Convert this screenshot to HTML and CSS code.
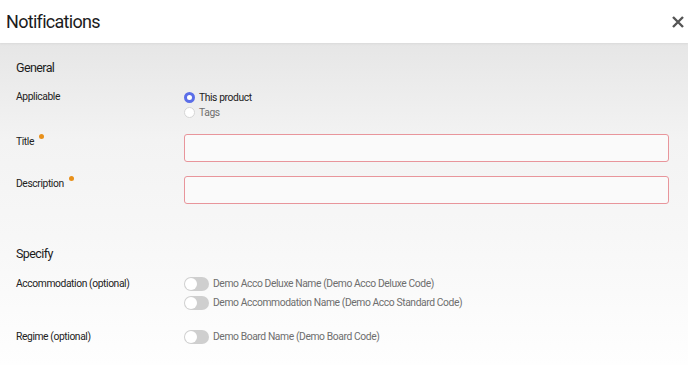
FILE: index.html
```html
<!DOCTYPE html>
<html lang="en">
<head>
    <meta charset="UTF-8">
    <meta name="viewport" content="width=device-width, initial-scale=1.0">
    <title>Notifications</title>
    <link rel="stylesheet" href="styles.css">
</head>
<body>
    <div class="modal">
        <div class="modal-header">
            <h1>Notifications</h1>
            <button class="close-btn" aria-label="Close">
                <svg width="12" height="12" viewBox="0 0 12 12">
                    <path d="M1 1 L11 11 M11 1 L1 11" stroke="#555" stroke-width="2.4" stroke-linecap="butt"/>
                </svg>
            </button>
        </div>

        <div class="modal-body">
            <h2 class="section-title">General</h2>

            <div class="row row-applicable">
                <div class="label">Applicable</div>
                <div class="field radios">
                    <label class="radio checked"><span class="dot"></span>This product</label>
                    <label class="radio muted"><span class="dot"></span>Tags</label>
                </div>
            </div>

            <div class="row row-input">
                <div class="label">Title<span class="required"></span></div>
                <div class="field"><input type="text" class="text-input"></div>
            </div>

            <div class="row row-input">
                <div class="label">Description<span class="required"></span></div>
                <div class="field"><input type="text" class="text-input"></div>
            </div>

            <h2 class="section-title specify">Specify</h2>

            <div class="row row-toggles">
                <div class="label">Accommodation (optional)</div>
                <div class="field toggles">
                    <label class="toggle"><span class="switch"></span>Demo Acco Deluxe Name (Demo Acco Deluxe Code)</label>
                    <label class="toggle"><span class="switch"></span>Demo Accommodation Name (Demo Acco Standard Code)</label>
                </div>
            </div>

            <div class="row row-toggles regime">
                <div class="label">Regime (optional)</div>
                <div class="field toggles">
                    <label class="toggle"><span class="switch"></span>Demo Board Name (Demo Board Code)</label>
                </div>
            </div>
        </div>
    </div>
</body>
</html>
```

FILE: styles.css
```css
:root {
    --text-color: #1c1c1c;
    --muted-color: #6e6e6e;
    --accent: #5b6ee8;
    --error-border: #e8959b;
    --required: #e8901a;
}

* {
    box-sizing: border-box;
}

body {
    margin: 0;
    font-family: Roboto, "Noto Sans", sans-serif;
    color: var(--text-color);
    background: #fff;
}

.modal {
    width: 688px;
    height: 365px;
    overflow: hidden;
}

.modal-header {
    height: 43px;
    display: flex;
    align-items: center;
    justify-content: space-between;
    padding: 0 2px 0 6px;
    background: #fff;
    box-shadow: 0 1px 2px rgba(0, 0, 0, 0.06);
    position: relative;
    z-index: 1;
}

.modal-header h1 {
    margin: 0;
    font-size: 18px;
    font-weight: 400;
    letter-spacing: -0.7px;
}

.close-btn {
    background: none;
    border: none;
    padding: 0;
    width: 16px;
    height: 16px;
    display: flex;
    align-items: center;
    justify-content: center;
    cursor: pointer;
}

.modal-body {
    height: 322px;
    padding: 17px 19px 0 16px;
    background: linear-gradient(to bottom, #e6e6e6 0%, #f3f3f3 30%, #f7f7f7 60%, #fefefe 100%);
}

.section-title {
    margin: 0;
    font-size: 12.5px;
    font-weight: 400;
    line-height: 16px;
    letter-spacing: -0.6px;
}

.section-title.specify {
    margin-top: 42px;
}

.row {
    display: flex;
}

.label {
    width: 168px;
    flex-shrink: 0;
    font-size: 10.3px;
    line-height: 14px;
    letter-spacing: -0.4px;
    color: #222;
}

.field {
    flex: 1;
}

.row-applicable {
    margin-top: 14px;
}

.radios {
    display: flex;
    flex-direction: column;
}

.radio {
    display: flex;
    align-items: center;
    font-size: 10.3px;
    letter-spacing: -0.4px;
    line-height: 15px;
    height: 15px;
}

.radio .dot {
    width: 11px;
    height: 11px;
    border-radius: 50%;
    border: 1px solid #d6d6d6;
    background: #fff;
    margin-right: 4px;
}

.radio.checked .dot {
    border: 3px solid var(--accent);
}

.radio.muted {
    color: var(--muted-color);
}

.row-input {
    margin-top: 14px;
}

.required {
    display: inline-block;
    width: 5px;
    height: 5px;
    border-radius: 50%;
    background: var(--required);
    margin-left: 5px;
    vertical-align: 6px;
}

.text-input {
    display: block;
    width: 100%;
    height: 28px;
    border: 1px solid var(--error-border);
    border-radius: 3px;
    background: #fafafa;
    outline: none;
}

.row-toggles {
    margin-top: 15px;
}

.row-toggles.regime {
    margin-top: 20px;
}

.toggles {
    display: flex;
    flex-direction: column;
    gap: 5px;
}

.toggle {
    display: flex;
    align-items: center;
    font-size: 10.3px;
    letter-spacing: -0.4px;
    line-height: 14px;
    height: 14px;
    color: var(--muted-color);
}

.switch {
    width: 25px;
    height: 14px;
    border-radius: 7px;
    background: #cfcfcf;
    position: relative;
    margin-right: 4px;
}

.switch::after {
    content: "";
    position: absolute;
    left: 1px;
    top: 1px;
    width: 12px;
    height: 12px;
    border-radius: 50%;
    background: #fff;
}
```
